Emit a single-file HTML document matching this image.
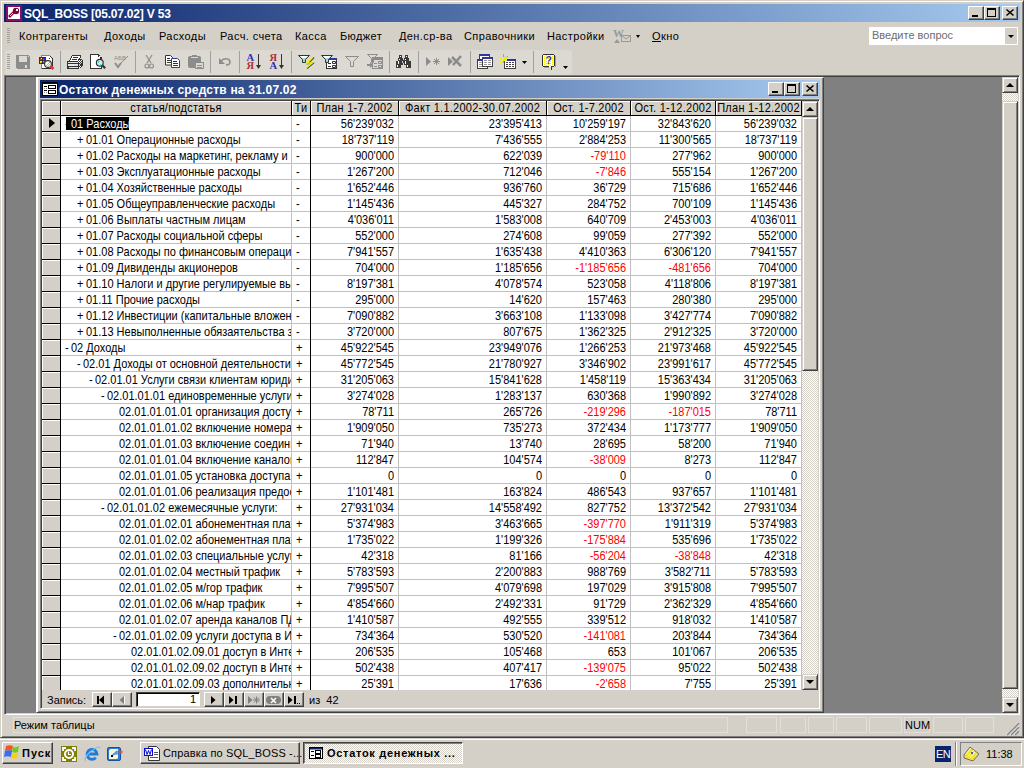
<!DOCTYPE html><html><head><meta charset="utf-8"><title>SQL_BOSS</title><style>
*{box-sizing:border-box;margin:0;padding:0}
html,body{width:1024px;height:768px;overflow:hidden;background:#d4d0c8;font-family:"Liberation Sans",sans-serif;font-size:11px;color:#000}
.abs{position:absolute}
.r3d{position:absolute;border:1px solid;border-color:#d4d0c8 #404040 #404040 #d4d0c8;box-shadow:inset 1px 1px #fff,inset -1px -1px #808080;background:#d4d0c8}
.tb3d{position:absolute;border:1px solid;border-color:#fff #404040 #404040 #fff;box-shadow:inset -1px -1px #808080;background:#d4d0c8}
.sunk{position:absolute;border:1px solid;border-color:#808080 #fff #fff #808080;box-shadow:inset 1px 1px #404040,inset -1px -1px #d4d0c8}
.t{position:absolute;white-space:pre;line-height:13px}
.m{transform:scaleY(1.125);transform-origin:0 10px}
.checker{background-color:#fff;background-image:linear-gradient(45deg,#d4d0c8 25%,transparent 25%,transparent 75%,#d4d0c8 75%),linear-gradient(45deg,#d4d0c8 25%,transparent 25%,transparent 75%,#d4d0c8 75%);background-size:2px 2px;background-position:0 0,1px 1px}
</style></head><body>
<div class="abs" style="left:0;top:0;width:1024px;height:738px;border:1px solid;border-color:#d4d0c8 #404040 #404040 #d4d0c8;box-shadow:inset 1px 1px #fff,inset -1px -1px #808080;background:#d4d0c8"></div>
<div class="abs" style="left:4px;top:4px;width:1016px;height:18px;background:linear-gradient(to right,#0a246a,#a6caf0)"></div>
<svg class="abs" style="left:6px;top:5px" width="16" height="16" viewBox="0 0 16 16" shape-rendering="crispEdges"><rect x="0" y="0" width="16" height="16" fill="#80106a"/><rect x="2" y="2" width="12" height="12" fill="#fff"/><path d="M3 12l5-5" stroke="#800040" stroke-width="2.6" shape-rendering="auto"/><circle cx="10" cy="6" r="3.2" fill="#800040" shape-rendering="auto"/><rect x="10" y="4" width="2" height="2" fill="#fff"/><path d="M4 11l3-3" stroke="#fff" stroke-width="0.8" shape-rendering="auto"/></svg>
<div class="t" style="left:24px;top:8px;color:#fff;font-weight:bold;font-size:12px;letter-spacing:-0.2px">SQL_BOSS [05.07.02] V 53</div>
<div class="tb3d" style="left:968px;top:6px;width:16px;height:14px"></div><div class="abs" style="left:972px;top:15px;width:6px;height:2px;background:#000"></div><div class="tb3d" style="left:984px;top:6px;width:16px;height:14px"></div><div class="abs" style="left:987px;top:8px;width:9px;height:9px;border:1px solid #000;border-top-width:2px"></div><div class="tb3d" style="left:1002px;top:6px;width:16px;height:14px"></div><svg class="abs" style="left:1002px;top:6px" width="16" height="14" viewBox="0 0 16 14"><path d="M4.5 3.5 L11.5 9.5 M11.5 3.5 L4.5 9.5" stroke="#000" stroke-width="1.6"/></svg>
<div class="abs" style="left:7px;top:28px;width:3px;height:15px;background:repeating-linear-gradient(to bottom,#a0a0a0 0,#a0a0a0 1px,transparent 1px,transparent 2px)"></div>
<div class="t" style="left:19px;top:30px;letter-spacing:0.4px">Контрагенты</div>
<div class="t" style="left:104px;top:30px;letter-spacing:0.4px">Доходы</div>
<div class="t" style="left:159px;top:30px;letter-spacing:0.4px">Расходы</div>
<div class="t" style="left:220px;top:30px;letter-spacing:0.4px">Расч. счета</div>
<div class="t" style="left:295px;top:30px;letter-spacing:0.4px">Касса</div>
<div class="t" style="left:340px;top:30px;letter-spacing:0.4px">Бюджет</div>
<div class="t" style="left:399px;top:30px;letter-spacing:0.4px">Ден.ср-ва</div>
<div class="t" style="left:464px;top:30px;letter-spacing:0.4px">Справочники</div>
<div class="t" style="left:547px;top:30px;letter-spacing:0.4px">Настройки</div>
<div class="t" style="left:652px;top:30px;letter-spacing:0.4px"><u>О</u>кно</div>
<svg class="abs" style="left:612px;top:27px" width="22" height="18" viewBox="0 0 22 18"><text x="1" y="10" font-family="Liberation Serif" font-size="11" font-weight="bold" fill="#999" letter-spacing="-1">W</text><rect x="9.5" y="8.5" width="9" height="6" fill="#d4d0c8" stroke="#999"/><path d="M9.5 8.5l4.5 3.5l4.5-3.5" fill="none" stroke="#999"/><path d="M2 16l3-4l3 4z" fill="#999"/></svg>
<div class="abs" style="left:636px;top:35px;width:0;height:0;border-left:2.5px solid transparent;border-right:2.5px solid transparent;border-top:3px solid #000"></div>
<div class="abs" style="left:869px;top:27px;width:149px;height:18px;background:#fff"></div>
<div class="t" style="left:872px;top:29px;color:#6d6d6d">Введите вопрос</div>
<div class="abs" style="left:1005px;top:28px;width:12px;height:16px;background:#d4d0c8"></div>
<div class="abs" style="left:1008px;top:35px;width:0;height:0;border-left:3px solid transparent;border-right:3px solid transparent;border-top:3px solid #000"></div>
<div class="abs" style="left:5px;top:50px;width:567px;height:25px;background:#dcd9d2;border-radius:3px"></div>
<div class="abs" style="left:7px;top:54px;width:3px;height:15px;background:repeating-linear-gradient(to bottom,#a0a0a0 0,#a0a0a0 1px,transparent 1px,transparent 2px)"></div>
<div class="abs" style="left:60px;top:51px;width:1px;height:22px;background:#a0a0a0"></div>
<div class="abs" style="left:135px;top:51px;width:1px;height:22px;background:#a0a0a0"></div>
<div class="abs" style="left:210px;top:51px;width:1px;height:22px;background:#a0a0a0"></div>
<div class="abs" style="left:239px;top:51px;width:1px;height:22px;background:#a0a0a0"></div>
<div class="abs" style="left:291px;top:51px;width:1px;height:22px;background:#a0a0a0"></div>
<div class="abs" style="left:389px;top:51px;width:1px;height:22px;background:#a0a0a0"></div>
<div class="abs" style="left:418px;top:51px;width:1px;height:22px;background:#a0a0a0"></div>
<div class="abs" style="left:470px;top:51px;width:1px;height:22px;background:#a0a0a0"></div>
<div class="abs" style="left:533px;top:51px;width:1px;height:22px;background:#a0a0a0"></div>
<svg class="abs" style="left:0;top:0" width="600" height="76" viewBox="0 0 600 76"><path d="M16 55h13v1h1v13h-13v-1h-1z" fill="#8c8c8c"/><rect x="19" y="56" width="8" height="6" fill="#dcd9d2"/><rect x="28" y="56" width="1" height="1" fill="#dcd9d2"/><rect x="25" y="65" width="2" height="3" fill="#dcd9d2"/><g shape-rendering="crispEdges"><rect x="41" y="55" width="9" height="14" fill="#888"/><rect x="42" y="56" width="8" height="12" fill="#fff"/><rect x="50" y="56" width="1" height="1" fill="#333"/><rect x="50" y="57" width="1" height="2" fill="#fff"/><rect x="49" y="58" width="1" height="1" fill="#333"/><rect x="51" y="57" width="1" height="1" fill="#333"/><rect x="50" y="59" width="2" height="9" fill="#fff"/><rect x="52" y="58" width="1" height="11" fill="#333"/><rect x="42" y="68" width="10" height="1" fill="#333"/><rect x="39" y="57" width="7" height="7" fill="#333"/><rect x="40" y="58" width="2" height="2" fill="#f02020"/><rect x="43" y="58" width="2" height="2" fill="#2020f0"/><rect x="40" y="61" width="2" height="2" fill="#f0f000"/><rect x="43" y="61" width="2" height="2" fill="#109010"/><rect x="41" y="58" width="1" height="1" fill="#c0f0f0"/><rect x="43" y="59" width="1" height="1" fill="#30a0a0"/><rect x="41" y="62" width="1" height="1" fill="#9090c0"/><rect x="43" y="61" width="1" height="1" fill="#a0a0c0"/></g><circle cx="48" cy="64" r="3.4" fill="#fff" stroke="#333" stroke-width="1.1"/><g shape-rendering="crispEdges" fill="#20f0f0"><rect x="49" y="62" width="1" height="1"/><rect x="48" y="63" width="1" height="1"/><rect x="50" y="63" width="1" height="1"/><rect x="47" y="64" width="1" height="1"/><rect x="49" y="64" width="1" height="1"/><rect x="46" y="65" width="1" height="1"/><rect x="48" y="65" width="1" height="1"/><rect x="47" y="66" width="1" height="1"/></g><path d="M50.5 66.3l3 2.6" stroke="#f03030" stroke-width="2.6"/><g shape-rendering="crispEdges"><rect x="72" y="55" width="9" height="1" fill="#333"/><rect x="71" y="56" width="10" height="2" fill="#333"/><rect x="70" y="58" width="10" height="2" fill="#333"/><rect x="69" y="60" width="11" height="1" fill="#333"/><rect x="72" y="56" width="8" height="2" fill="#fff"/><rect x="71" y="58" width="8" height="2" fill="#fff"/><rect x="70" y="60" width="9" height="1" fill="#fff"/><rect x="73" y="57" width="5" height="1" fill="#333"/><rect x="72" y="59" width="5" height="1" fill="#333"/><rect x="67" y="61" width="12" height="8" fill="#333"/><rect x="68" y="62" width="10" height="1" fill="#e0e0e0"/><rect x="68" y="64" width="11" height="2" fill="#e8e8f0"/><rect x="74" y="65" width="4" height="1" fill="#f0f000"/><rect x="69" y="67" width="9" height="1" fill="#e0e0e0"/><rect x="78" y="59" width="5" height="9" fill="#333"/><rect x="79" y="60" width="1" height="1" fill="#fff"/><rect x="81" y="60" width="1" height="1" fill="#fff"/><rect x="78" y="61" width="1" height="1" fill="#fff"/><rect x="80" y="61" width="1" height="1" fill="#fff"/><rect x="79" y="62" width="1" height="1" fill="#fff"/><rect x="81" y="62" width="1" height="1" fill="#ccc"/><rect x="80" y="63" width="1" height="1" fill="#ccc"/><rect x="79" y="64" width="1" height="2" fill="#ccc"/><rect x="80" y="66" width="1" height="1" fill="#fff"/><rect x="79" y="67" width="1" height="1" fill="#fff"/><rect x="82" y="59" width="1" height="1" fill="#d4d0c8"/><rect x="82" y="66" width="1" height="2" fill="#d4d0c8"/><rect x="81" y="67" width="1" height="1" fill="#d4d0c8"/></g><g shape-rendering="crispEdges"><rect x="90" y="54" width="9" height="15" fill="#333"/><rect x="91" y="55" width="7" height="13" fill="#fff"/><rect x="98" y="55" width="2" height="2" fill="#333"/><rect x="99" y="56" width="1" height="1" fill="#fff"/><rect x="100" y="57" width="2" height="3" fill="#333"/><rect x="98" y="57" width="2" height="11" fill="#fff"/><rect x="100" y="60" width="1" height="8" fill="#fff"/><rect x="90" y="68" width="12" height="1" fill="#333"/><rect x="101" y="66" width="1" height="2" fill="#333"/></g><circle cx="99.8" cy="62.8" r="3.4" fill="#e4e4e4" stroke="#333" stroke-width="1.2"/><g shape-rendering="crispEdges" fill="#20f0f0"><rect x="98" y="61" width="2" height="1"/><rect x="98" y="62" width="1" height="1"/><rect x="100" y="64" width="1" height="1"/></g><path d="M102.6 65.6l2.6 2.6" stroke="#333" stroke-width="2.2"/><text x="114" y="60" font-family="Liberation Sans" font-size="6" fill="#8c8c8c">АБВ</text><path d="M115 63l3 4l3-4" fill="none" stroke="#8c8c8c" stroke-width="2"/><path d="M121 63l7-7" stroke="#8c8c8c" stroke-width="1"/><path d="M146 55l5 8M152 55l-5 8" stroke="#8c8c8c" stroke-width="1.2"/><circle cx="147" cy="66" r="2" fill="none" stroke="#8c8c8c" stroke-width="1.1"/><circle cx="151.5" cy="66" r="2" fill="none" stroke="#8c8c8c" stroke-width="1.1"/><path d="M165.5 55.5h5l2 2v7.5h-7z" fill="#fff" stroke="#333"/><path d="M167 58.5h3M167 60.5h4M167 62.5h4" stroke="#333"/><path d="M171.5 58.5h6l2 2v7h-8z" fill="#fff" stroke="#3535a0"/><path d="M173 61.5h4M173 63.5h5M173 65.5h5" stroke="#333"/><rect x="188" y="56" width="13" height="12" rx="2" fill="#8c8c8c"/><rect x="192" y="55" width="5" height="2" fill="#8c8c8c"/><rect x="191" y="57" width="7" height="1" fill="#dcd9d2"/><rect x="195.5" y="62.5" width="8" height="6" fill="#dcd9d2" stroke="#8c8c8c"/><path d="M197 65.5h5M197 67.5h5" stroke="#8c8c8c"/><path d="M221 61c3-3 9-3 9 1c0 2-2 3-4 3" fill="none" stroke="#8c8c8c" stroke-width="1.5"/><path d="M219 58v6h6z" fill="#8c8c8c"/><text x="246.5" y="61.3" font-family="Liberation Serif" font-size="10.5" font-weight="bold" fill="#3030b0">A</text><text x="246.5" y="69" font-family="Liberation Serif" font-size="10.5" font-weight="bold" fill="#b03030">Я</text><path d="M258.5 54v13" stroke="#333" stroke-width="1"/><path d="M256 65h5l-2.5 4z" fill="#333"/><text x="269.5" y="61.3" font-family="Liberation Serif" font-size="10.5" font-weight="bold" fill="#b03030">Я</text><text x="269.5" y="69" font-family="Liberation Serif" font-size="10.5" font-weight="bold" fill="#3030b0">A</text><path d="M281.5 54v13" stroke="#333" stroke-width="1"/><path d="M279 65h5l-2.5 4z" fill="#333"/><path d="M298.5 55.5h11l-4 4v3h-3v-3z" fill="#9fd8d8" stroke="#333"/><path d="M300 56h8l-2 2h-4z" fill="#fff"/><path d="M314 57.5l-6 6h5l-6 5" fill="none" stroke="#303060" stroke-width="1.3"/><path d="M313 57l-6 6h5l-6 5" fill="none" stroke="#f0f000" stroke-width="1.6"/><rect x="326.5" y="58.5" width="10" height="10" fill="#fff" stroke="#333"/><rect x="327" y="58" width="10" height="2" fill="#3535a0"/><path d="M332.5 61.5h3v2h-3zM332.5 65.5h3v2h-3z" fill="none" stroke="#333"/><path d="M328 63.5h3M328 66.5h3" stroke="#333"/><path d="M321.5 55.5h11l-4 4v3h-3v-3z" fill="#9fd8d8" stroke="#333"/><path d="M323 56h8l-2 2h-4z" fill="#fff"/><path d="M345.5 56.5h13l-5 5v5h-3v-5z" fill="none" stroke="#8c8c8c" stroke-width="1"/><rect x="372.5" y="57.5" width="10" height="11" fill="none" stroke="#8c8c8c"/><rect x="373" y="58" width="10" height="2" fill="#8c8c8c"/><path d="M378.5 61.5h3v2h-3zM378.5 65.5h3v2h-3z" fill="none" stroke="#8c8c8c"/><path d="M374 63.5h3M374 66.5h3" stroke="#8c8c8c"/><path d="M367.5 54.5h10l-4 4v4h-2v-4z" fill="none" stroke="#8c8c8c"/><path d="M367 64h3v-2l3 3l-3 3v-2h-3z" fill="#8c8c8c"/><g fill="#3a3a3a" shape-rendering="crispEdges"><rect x="399" y="55" width="3" height="3"/><rect x="398" y="58" width="5" height="3"/><rect x="396" y="61" width="7" height="4"/><rect x="396" y="65" width="5" height="3"/><rect x="405" y="55" width="3" height="3"/><rect x="404" y="58" width="5" height="3"/><rect x="404" y="61" width="7" height="4"/><rect x="406" y="65" width="5" height="3"/><rect x="402" y="60" width="3" height="3"/></g><g fill="#fff" shape-rendering="crispEdges"><rect x="400" y="56" width="1" height="1"/><rect x="399" y="59" width="1" height="1"/><rect x="398" y="61" width="1" height="3"/><rect x="397" y="65" width="1" height="2"/><rect x="406" y="56" width="1" height="1"/><rect x="405" y="59" width="1" height="1"/><rect x="405" y="61" width="1" height="3"/><rect x="407" y="65" width="1" height="2"/><rect x="402" y="61" width="1" height="2" fill="#ccc"/></g><path d="M426 57v9l5-4.5z" fill="#8c8c8c"/><path d="M436.5 58v7M433 61.5h7M434 59l5 5M439 59l-5 5" stroke="#8c8c8c" stroke-width="1"/><path d="M448 57v9l5-4.5z" fill="#8c8c8c"/><path d="M452 57l9 9M461 56l-8 9" stroke="#8c8c8c" stroke-width="2.5"/><g shape-rendering="crispEdges"><rect x="479" y="54" width="11" height="6" fill="#404040"/><rect x="479" y="54" width="11" height="2" fill="#3535a0"/><rect x="480" y="56" width="9" height="3" fill="#fff"/><rect x="477" y="59" width="11" height="10" fill="#404040"/><rect x="477" y="59" width="11" height="2" fill="#3535a0"/><rect x="478" y="61" width="9" height="7" fill="#fff"/><rect x="479" y="62" width="3" height="1" fill="#999"/><rect x="479" y="64" width="3" height="1" fill="#999"/><rect x="479" y="66" width="3" height="1" fill="#999"/><rect x="482" y="57" width="11" height="10" fill="#404040"/><rect x="482" y="57" width="11" height="2" fill="#3535a0"/><rect x="483" y="59" width="9" height="7" fill="#fff"/><rect x="484" y="60" width="3" height="1" fill="#999"/><rect x="488" y="60" width="3" height="1" fill="#999"/><rect x="484" y="62" width="3" height="1" fill="#999"/><rect x="488" y="62" width="3" height="1" fill="#999"/><rect x="484" y="64" width="3" height="1" fill="#999"/><rect x="488" y="64" width="3" height="1" fill="#999"/></g><g shape-rendering="crispEdges"><rect x="504" y="59" width="12" height="10" fill="#404040"/><rect x="504" y="59" width="12" height="2" fill="#3535a0"/><rect x="505" y="61" width="10" height="7" fill="#fff"/><g fill="#404040"><rect x="506" y="62" width="2" height="1"/><rect x="509" y="62" width="2" height="1"/><rect x="512" y="62" width="2" height="1"/><rect x="506" y="64" width="2" height="1"/><rect x="509" y="64" width="2" height="1"/><rect x="512" y="64" width="2" height="1"/><rect x="506" y="66" width="2" height="1"/><rect x="509" y="66" width="2" height="1"/><rect x="512" y="66" width="2" height="1"/></g><rect x="503" y="56" width="4" height="5" fill="#d4d0c8"/><g fill="#f0f000"><rect x="504" y="55" width="1" height="1"/><rect x="501" y="56" width="1" height="1"/><rect x="500" y="58" width="1" height="1"/><rect x="503" y="58" width="2" height="2"/><rect x="506" y="58" width="1" height="1"/><rect x="502" y="60" width="1" height="1"/><rect x="500" y="62" width="1" height="1"/><rect x="504" y="60" width="1" height="1"/></g><g fill="#a0a0a0"><rect x="503" y="54" width="1" height="3"/><rect x="503" y="61" width="1" height="2"/><rect x="507" y="56" width="1" height="1"/></g></g><path d="M522 61h5l-2.5 3z" fill="#000"/><g shape-rendering="crispEdges"><rect x="543" y="54" width="11" height="13" fill="#333"/><rect x="542" y="55" width="13" height="11" fill="#333"/><rect x="543" y="55" width="11" height="11" fill="#fff"/><g fill="#f0f000"><rect x="544" y="56" width="1" height="1"/><rect x="548" y="56" width="1" height="1"/><rect x="552" y="56" width="1" height="1"/><rect x="544" y="58" width="1" height="1"/><rect x="548" y="58" width="1" height="1"/><rect x="552" y="58" width="1" height="1"/><rect x="544" y="60" width="1" height="1"/><rect x="548" y="60" width="1" height="1"/><rect x="552" y="60" width="1" height="1"/><rect x="544" y="62" width="1" height="1"/><rect x="548" y="62" width="1" height="1"/><rect x="552" y="62" width="1" height="1"/><rect x="544" y="64" width="1" height="1"/><rect x="548" y="64" width="1" height="1"/><rect x="552" y="64" width="1" height="1"/><rect x="546" y="55" width="1" height="1"/><rect x="550" y="55" width="1" height="1"/><rect x="546" y="57" width="1" height="1"/><rect x="550" y="57" width="1" height="1"/><rect x="546" y="59" width="1" height="1"/><rect x="550" y="59" width="1" height="1"/><rect x="546" y="61" width="1" height="1"/><rect x="550" y="61" width="1" height="1"/><rect x="546" y="63" width="1" height="1"/><rect x="550" y="63" width="1" height="1"/><rect x="546" y="65" width="1" height="1"/><rect x="550" y="65" width="1" height="1"/></g><rect x="555" y="56" width="1" height="11" fill="#a0a0a0"/><rect x="544" y="67" width="5" height="1" fill="#a0a0a0"/><rect x="549" y="66" width="2" height="1" fill="#fff"/><rect x="550" y="67" width="2" height="1" fill="#333"/><rect x="551" y="68" width="1" height="2" fill="#333"/><rect x="550" y="67" width="1" height="1" fill="#f0f000"/></g><text x="545.6" y="64.2" font-family="Liberation Sans" font-size="10.5" font-weight="bold" fill="#3535a0">?</text><path d="M563 66h5l-2.5 3z" fill="#000"/></svg>
<div class="sunk" style="left:4px;top:75px;width:1016px;height:640px;background:#808080"></div>
<div class="checker abs" style="left:1002px;top:77px;width:16px;height:636px"></div>
<div class="r3d" style="left:1002px;top:77px;width:16px;height:16px"></div>
<div class="abs" style="left:1006px;top:83px;width:0;height:0;border-left:4px solid transparent;border-right:4px solid transparent;border-bottom:4px solid #000"></div>
<div class="r3d" style="left:1002px;top:101px;width:16px;height:588px"></div>
<div class="r3d" style="left:1002px;top:697px;width:16px;height:16px"></div>
<div class="abs" style="left:1006px;top:703px;width:0;height:0;border-left:4px solid transparent;border-right:4px solid transparent;border-top:4px solid #000"></div>
<div class="abs" style="left:36px;top:77px;width:788px;height:636px;border:1px solid;border-color:#fff #404040 #404040 #fff;box-shadow:inset 1px 0 #fff,inset -1px -1px #808080;background:#d4d0c8"></div>
<div class="abs" style="left:40px;top:80px;width:780px;height:18px;background:linear-gradient(to right,#0a246a,#a6caf0)"></div>
<svg class="abs" style="left:42px;top:82px" width="16" height="14" viewBox="0 0 16 14" shape-rendering="crispEdges"><rect x="0" y="0" width="16" height="14" fill="#000"/><rect x="1" y="1" width="14" height="1" fill="#0000a0"/><rect x="1" y="2" width="14" height="11" fill="#fff"/><rect x="2" y="4" width="3" height="1" fill="#000"/><rect x="2" y="8" width="3" height="1" fill="#000"/><rect x="6" y="3" width="8" height="4" fill="#000"/><rect x="7" y="4" width="6" height="2" fill="#fff"/><rect x="6" y="8" width="8" height="4" fill="#000"/><rect x="7" y="9" width="6" height="2" fill="#fff"/><rect x="2" y="6" width="1" height="1" fill="#888"/><rect x="4" y="6" width="1" height="1" fill="#888"/><rect x="2" y="10" width="1" height="1" fill="#888"/><rect x="4" y="10" width="1" height="1" fill="#888"/></svg>
<div class="t" style="left:59px;top:84px;color:#fff;font-weight:bold;font-size:12px;letter-spacing:0.2px">Остаток денежных средств на 31.07.02</div>
<div class="tb3d" style="left:768px;top:82px;width:16px;height:14px"></div><div class="abs" style="left:772px;top:91px;width:6px;height:2px;background:#000"></div><div class="tb3d" style="left:784px;top:82px;width:16px;height:14px"></div><div class="abs" style="left:787px;top:84px;width:9px;height:9px;border:1px solid #000;border-top-width:2px"></div><div class="tb3d" style="left:802px;top:82px;width:16px;height:14px"></div><svg class="abs" style="left:802px;top:82px" width="16" height="14" viewBox="0 0 16 14"><path d="M4.5 3.5 L11.5 9.5 M11.5 3.5 L4.5 9.5" stroke="#000" stroke-width="1.6"/></svg>
<div class="sunk" style="left:40px;top:99px;width:780px;height:610px;background:#d4d0c8"></div>
<div class="abs" style="left:61px;top:116px;width:741px;height:574px;background:#fff"></div>
<div class="abs" style="left:42px;top:101px;width:760px;height:14px;background:#d4d0c8"></div>
<div class="abs" style="left:42px;top:101px;width:18px;height:14px;box-shadow:inset 1px 1px #fff"></div>
<div class="abs" style="left:61px;top:101px;width:230px;height:14px;box-shadow:inset 1px 1px #fff"></div>
<div class="t m" style="left:61px;top:102px;width:230px;text-align:center;overflow:hidden;letter-spacing:0.25px">статья/подстатья</div>
<div class="abs" style="left:292px;top:101px;width:18px;height:14px;box-shadow:inset 1px 1px #fff"></div>
<div class="t m" style="left:292px;top:102px;width:18px;text-align:center;overflow:hidden;letter-spacing:0.25px">Ти</div>
<div class="abs" style="left:311px;top:101px;width:87px;height:14px;box-shadow:inset 1px 1px #fff"></div>
<div class="t m" style="left:311px;top:102px;width:87px;text-align:center;overflow:hidden;letter-spacing:0.25px">План 1-7.2002</div>
<div class="abs" style="left:399px;top:101px;width:147px;height:14px;box-shadow:inset 1px 1px #fff"></div>
<div class="t m" style="left:399px;top:102px;width:147px;text-align:center;overflow:hidden;letter-spacing:0.25px">Факт 1.1.2002-30.07.2002</div>
<div class="abs" style="left:547px;top:101px;width:83px;height:14px;box-shadow:inset 1px 1px #fff"></div>
<div class="t m" style="left:547px;top:102px;width:83px;text-align:center;overflow:hidden;letter-spacing:0.25px">Ост. 1-7.2002</div>
<div class="abs" style="left:631px;top:101px;width:84px;height:14px;box-shadow:inset 1px 1px #fff"></div>
<div class="t m" style="left:631px;top:102px;width:84px;text-align:center;overflow:hidden;letter-spacing:0.25px">Ост. 1-12.2002</div>
<div class="abs" style="left:716px;top:101px;width:85px;height:14px;box-shadow:inset 1px 1px #fff"></div>
<div class="t m" style="left:716px;top:102px;width:85px;text-align:center;overflow:hidden;letter-spacing:0.25px">План 1-12.2002</div>
<div class="abs" style="left:42px;top:115px;width:760px;height:1px;background:#000"></div>
<div class="abs" style="left:42px;top:116px;width:18px;height:574px;background:#d4d0c8"></div>
<div class="abs" style="left:60px;top:101px;width:1px;height:589px;background:#000"></div>
<div class="abs" style="left:42px;top:116px;width:18px;height:15px;box-shadow:inset 1px 1px #fff"></div>
<div class="abs" style="left:42px;top:131px;width:18px;height:1px;background:#000"></div>
<div class="abs" style="left:61px;top:131px;width:741px;height:1px;background:#c0c0c0"></div>
<div class="abs" style="left:42px;top:132px;width:18px;height:15px;box-shadow:inset 1px 1px #fff"></div>
<div class="abs" style="left:42px;top:147px;width:18px;height:1px;background:#000"></div>
<div class="abs" style="left:61px;top:147px;width:741px;height:1px;background:#c0c0c0"></div>
<div class="abs" style="left:42px;top:148px;width:18px;height:15px;box-shadow:inset 1px 1px #fff"></div>
<div class="abs" style="left:42px;top:163px;width:18px;height:1px;background:#000"></div>
<div class="abs" style="left:61px;top:163px;width:741px;height:1px;background:#c0c0c0"></div>
<div class="abs" style="left:42px;top:164px;width:18px;height:15px;box-shadow:inset 1px 1px #fff"></div>
<div class="abs" style="left:42px;top:179px;width:18px;height:1px;background:#000"></div>
<div class="abs" style="left:61px;top:179px;width:741px;height:1px;background:#c0c0c0"></div>
<div class="abs" style="left:42px;top:180px;width:18px;height:15px;box-shadow:inset 1px 1px #fff"></div>
<div class="abs" style="left:42px;top:195px;width:18px;height:1px;background:#000"></div>
<div class="abs" style="left:61px;top:195px;width:741px;height:1px;background:#c0c0c0"></div>
<div class="abs" style="left:42px;top:196px;width:18px;height:15px;box-shadow:inset 1px 1px #fff"></div>
<div class="abs" style="left:42px;top:211px;width:18px;height:1px;background:#000"></div>
<div class="abs" style="left:61px;top:211px;width:741px;height:1px;background:#c0c0c0"></div>
<div class="abs" style="left:42px;top:212px;width:18px;height:15px;box-shadow:inset 1px 1px #fff"></div>
<div class="abs" style="left:42px;top:227px;width:18px;height:1px;background:#000"></div>
<div class="abs" style="left:61px;top:227px;width:741px;height:1px;background:#c0c0c0"></div>
<div class="abs" style="left:42px;top:228px;width:18px;height:15px;box-shadow:inset 1px 1px #fff"></div>
<div class="abs" style="left:42px;top:243px;width:18px;height:1px;background:#000"></div>
<div class="abs" style="left:61px;top:243px;width:741px;height:1px;background:#c0c0c0"></div>
<div class="abs" style="left:42px;top:244px;width:18px;height:15px;box-shadow:inset 1px 1px #fff"></div>
<div class="abs" style="left:42px;top:259px;width:18px;height:1px;background:#000"></div>
<div class="abs" style="left:61px;top:259px;width:741px;height:1px;background:#c0c0c0"></div>
<div class="abs" style="left:42px;top:260px;width:18px;height:15px;box-shadow:inset 1px 1px #fff"></div>
<div class="abs" style="left:42px;top:275px;width:18px;height:1px;background:#000"></div>
<div class="abs" style="left:61px;top:275px;width:741px;height:1px;background:#c0c0c0"></div>
<div class="abs" style="left:42px;top:276px;width:18px;height:15px;box-shadow:inset 1px 1px #fff"></div>
<div class="abs" style="left:42px;top:291px;width:18px;height:1px;background:#000"></div>
<div class="abs" style="left:61px;top:291px;width:741px;height:1px;background:#c0c0c0"></div>
<div class="abs" style="left:42px;top:292px;width:18px;height:15px;box-shadow:inset 1px 1px #fff"></div>
<div class="abs" style="left:42px;top:307px;width:18px;height:1px;background:#000"></div>
<div class="abs" style="left:61px;top:307px;width:741px;height:1px;background:#c0c0c0"></div>
<div class="abs" style="left:42px;top:308px;width:18px;height:15px;box-shadow:inset 1px 1px #fff"></div>
<div class="abs" style="left:42px;top:323px;width:18px;height:1px;background:#000"></div>
<div class="abs" style="left:61px;top:323px;width:741px;height:1px;background:#c0c0c0"></div>
<div class="abs" style="left:42px;top:324px;width:18px;height:15px;box-shadow:inset 1px 1px #fff"></div>
<div class="abs" style="left:42px;top:339px;width:18px;height:1px;background:#000"></div>
<div class="abs" style="left:61px;top:339px;width:741px;height:1px;background:#c0c0c0"></div>
<div class="abs" style="left:42px;top:340px;width:18px;height:15px;box-shadow:inset 1px 1px #fff"></div>
<div class="abs" style="left:42px;top:355px;width:18px;height:1px;background:#000"></div>
<div class="abs" style="left:61px;top:355px;width:741px;height:1px;background:#c0c0c0"></div>
<div class="abs" style="left:42px;top:356px;width:18px;height:15px;box-shadow:inset 1px 1px #fff"></div>
<div class="abs" style="left:42px;top:371px;width:18px;height:1px;background:#000"></div>
<div class="abs" style="left:61px;top:371px;width:741px;height:1px;background:#c0c0c0"></div>
<div class="abs" style="left:42px;top:372px;width:18px;height:15px;box-shadow:inset 1px 1px #fff"></div>
<div class="abs" style="left:42px;top:387px;width:18px;height:1px;background:#000"></div>
<div class="abs" style="left:61px;top:387px;width:741px;height:1px;background:#c0c0c0"></div>
<div class="abs" style="left:42px;top:388px;width:18px;height:15px;box-shadow:inset 1px 1px #fff"></div>
<div class="abs" style="left:42px;top:403px;width:18px;height:1px;background:#000"></div>
<div class="abs" style="left:61px;top:403px;width:741px;height:1px;background:#c0c0c0"></div>
<div class="abs" style="left:42px;top:404px;width:18px;height:15px;box-shadow:inset 1px 1px #fff"></div>
<div class="abs" style="left:42px;top:419px;width:18px;height:1px;background:#000"></div>
<div class="abs" style="left:61px;top:419px;width:741px;height:1px;background:#c0c0c0"></div>
<div class="abs" style="left:42px;top:420px;width:18px;height:15px;box-shadow:inset 1px 1px #fff"></div>
<div class="abs" style="left:42px;top:435px;width:18px;height:1px;background:#000"></div>
<div class="abs" style="left:61px;top:435px;width:741px;height:1px;background:#c0c0c0"></div>
<div class="abs" style="left:42px;top:436px;width:18px;height:15px;box-shadow:inset 1px 1px #fff"></div>
<div class="abs" style="left:42px;top:451px;width:18px;height:1px;background:#000"></div>
<div class="abs" style="left:61px;top:451px;width:741px;height:1px;background:#c0c0c0"></div>
<div class="abs" style="left:42px;top:452px;width:18px;height:15px;box-shadow:inset 1px 1px #fff"></div>
<div class="abs" style="left:42px;top:467px;width:18px;height:1px;background:#000"></div>
<div class="abs" style="left:61px;top:467px;width:741px;height:1px;background:#c0c0c0"></div>
<div class="abs" style="left:42px;top:468px;width:18px;height:15px;box-shadow:inset 1px 1px #fff"></div>
<div class="abs" style="left:42px;top:483px;width:18px;height:1px;background:#000"></div>
<div class="abs" style="left:61px;top:483px;width:741px;height:1px;background:#c0c0c0"></div>
<div class="abs" style="left:42px;top:484px;width:18px;height:15px;box-shadow:inset 1px 1px #fff"></div>
<div class="abs" style="left:42px;top:499px;width:18px;height:1px;background:#000"></div>
<div class="abs" style="left:61px;top:499px;width:741px;height:1px;background:#c0c0c0"></div>
<div class="abs" style="left:42px;top:500px;width:18px;height:15px;box-shadow:inset 1px 1px #fff"></div>
<div class="abs" style="left:42px;top:515px;width:18px;height:1px;background:#000"></div>
<div class="abs" style="left:61px;top:515px;width:741px;height:1px;background:#c0c0c0"></div>
<div class="abs" style="left:42px;top:516px;width:18px;height:15px;box-shadow:inset 1px 1px #fff"></div>
<div class="abs" style="left:42px;top:531px;width:18px;height:1px;background:#000"></div>
<div class="abs" style="left:61px;top:531px;width:741px;height:1px;background:#c0c0c0"></div>
<div class="abs" style="left:42px;top:532px;width:18px;height:15px;box-shadow:inset 1px 1px #fff"></div>
<div class="abs" style="left:42px;top:547px;width:18px;height:1px;background:#000"></div>
<div class="abs" style="left:61px;top:547px;width:741px;height:1px;background:#c0c0c0"></div>
<div class="abs" style="left:42px;top:548px;width:18px;height:15px;box-shadow:inset 1px 1px #fff"></div>
<div class="abs" style="left:42px;top:563px;width:18px;height:1px;background:#000"></div>
<div class="abs" style="left:61px;top:563px;width:741px;height:1px;background:#c0c0c0"></div>
<div class="abs" style="left:42px;top:564px;width:18px;height:15px;box-shadow:inset 1px 1px #fff"></div>
<div class="abs" style="left:42px;top:579px;width:18px;height:1px;background:#000"></div>
<div class="abs" style="left:61px;top:579px;width:741px;height:1px;background:#c0c0c0"></div>
<div class="abs" style="left:42px;top:580px;width:18px;height:15px;box-shadow:inset 1px 1px #fff"></div>
<div class="abs" style="left:42px;top:595px;width:18px;height:1px;background:#000"></div>
<div class="abs" style="left:61px;top:595px;width:741px;height:1px;background:#c0c0c0"></div>
<div class="abs" style="left:42px;top:596px;width:18px;height:15px;box-shadow:inset 1px 1px #fff"></div>
<div class="abs" style="left:42px;top:611px;width:18px;height:1px;background:#000"></div>
<div class="abs" style="left:61px;top:611px;width:741px;height:1px;background:#c0c0c0"></div>
<div class="abs" style="left:42px;top:612px;width:18px;height:15px;box-shadow:inset 1px 1px #fff"></div>
<div class="abs" style="left:42px;top:627px;width:18px;height:1px;background:#000"></div>
<div class="abs" style="left:61px;top:627px;width:741px;height:1px;background:#c0c0c0"></div>
<div class="abs" style="left:42px;top:628px;width:18px;height:15px;box-shadow:inset 1px 1px #fff"></div>
<div class="abs" style="left:42px;top:643px;width:18px;height:1px;background:#000"></div>
<div class="abs" style="left:61px;top:643px;width:741px;height:1px;background:#c0c0c0"></div>
<div class="abs" style="left:42px;top:644px;width:18px;height:15px;box-shadow:inset 1px 1px #fff"></div>
<div class="abs" style="left:42px;top:659px;width:18px;height:1px;background:#000"></div>
<div class="abs" style="left:61px;top:659px;width:741px;height:1px;background:#c0c0c0"></div>
<div class="abs" style="left:42px;top:660px;width:18px;height:15px;box-shadow:inset 1px 1px #fff"></div>
<div class="abs" style="left:42px;top:675px;width:18px;height:1px;background:#000"></div>
<div class="abs" style="left:61px;top:675px;width:741px;height:1px;background:#c0c0c0"></div>
<div class="abs" style="left:42px;top:676px;width:18px;height:14px;box-shadow:inset 1px 1px #fff"></div>
<div class="abs" style="left:291px;top:101px;width:1px;height:14px;background:#000"></div>
<div class="abs" style="left:291px;top:116px;width:1px;height:574px;background:#c0c0c0"></div>
<div class="abs" style="left:310px;top:101px;width:1px;height:589px;background:#000"></div>
<div class="abs" style="left:398px;top:101px;width:1px;height:14px;background:#000"></div>
<div class="abs" style="left:398px;top:116px;width:1px;height:574px;background:#c0c0c0"></div>
<div class="abs" style="left:546px;top:101px;width:1px;height:14px;background:#000"></div>
<div class="abs" style="left:546px;top:116px;width:1px;height:574px;background:#c0c0c0"></div>
<div class="abs" style="left:630px;top:101px;width:1px;height:14px;background:#000"></div>
<div class="abs" style="left:630px;top:116px;width:1px;height:574px;background:#c0c0c0"></div>
<div class="abs" style="left:715px;top:101px;width:1px;height:14px;background:#000"></div>
<div class="abs" style="left:715px;top:116px;width:1px;height:574px;background:#c0c0c0"></div>
<div class="abs" style="left:801px;top:101px;width:1px;height:14px;background:#000"></div>
<div class="abs" style="left:801px;top:116px;width:1px;height:574px;background:#c0c0c0"></div>
<div class="abs" style="left:49px;top:118px;width:0;height:0;border-top:5.5px solid transparent;border-bottom:5.5px solid transparent;border-left:6px solid #000"></div>
<div class="abs" style="left:61px;top:116px;width:741px;height:574px;overflow:hidden">
<div class="abs" style="left:0;top:0px;width:230px;height:15px;overflow:hidden">
<div class="abs" style="left:5px;top:1px;width:63px;height:13px;background:#000"></div>
<div class="t m" style="left:4px;top:2px">-</div>
<div class="t m" style="left:10px;top:2px;color:#fff">01 Расходы</div>
</div>
<div class="t m" style="left:235px;top:2px">-</div>
<div class="t m" style="left:250px;top:2px;width:83px;text-align:right;color:#000">56'239'032</div>
<div class="t m" style="left:338px;top:2px;width:143px;text-align:right;color:#000">23'395'413</div>
<div class="t m" style="left:486px;top:2px;width:79px;text-align:right;color:#000">10'259'197</div>
<div class="t m" style="left:570px;top:2px;width:80px;text-align:right;color:#000">32'843'620</div>
<div class="t m" style="left:655px;top:2px;width:81px;text-align:right;color:#000">56'239'032</div>
<div class="abs" style="left:0;top:16px;width:230px;height:15px;overflow:hidden">
<div class="t m" style="left:16px;top:2px">+</div>
<div class="t m" style="left:25px;top:2px">01.01 Операционные расходы</div>
</div>
<div class="t m" style="left:235px;top:18px">-</div>
<div class="t m" style="left:250px;top:18px;width:83px;text-align:right;color:#000">18'737'119</div>
<div class="t m" style="left:338px;top:18px;width:143px;text-align:right;color:#000">7'436'555</div>
<div class="t m" style="left:486px;top:18px;width:79px;text-align:right;color:#000">2'884'253</div>
<div class="t m" style="left:570px;top:18px;width:80px;text-align:right;color:#000">11'300'565</div>
<div class="t m" style="left:655px;top:18px;width:81px;text-align:right;color:#000">18'737'119</div>
<div class="abs" style="left:0;top:32px;width:230px;height:15px;overflow:hidden">
<div class="t m" style="left:16px;top:2px">+</div>
<div class="t m" style="left:25px;top:2px">01.02 Расходы на маркетинг, рекламу и</div>
</div>
<div class="t m" style="left:235px;top:34px">-</div>
<div class="t m" style="left:250px;top:34px;width:83px;text-align:right;color:#000">900'000</div>
<div class="t m" style="left:338px;top:34px;width:143px;text-align:right;color:#000">622'039</div>
<div class="t m" style="left:486px;top:34px;width:79px;text-align:right;color:#f00">-79'110</div>
<div class="t m" style="left:570px;top:34px;width:80px;text-align:right;color:#000">277'962</div>
<div class="t m" style="left:655px;top:34px;width:81px;text-align:right;color:#000">900'000</div>
<div class="abs" style="left:0;top:48px;width:230px;height:15px;overflow:hidden">
<div class="t m" style="left:16px;top:2px">+</div>
<div class="t m" style="left:25px;top:2px">01.03 Эксплуатационные расходы</div>
</div>
<div class="t m" style="left:235px;top:50px">-</div>
<div class="t m" style="left:250px;top:50px;width:83px;text-align:right;color:#000">1'267'200</div>
<div class="t m" style="left:338px;top:50px;width:143px;text-align:right;color:#000">712'046</div>
<div class="t m" style="left:486px;top:50px;width:79px;text-align:right;color:#f00">-7'846</div>
<div class="t m" style="left:570px;top:50px;width:80px;text-align:right;color:#000">555'154</div>
<div class="t m" style="left:655px;top:50px;width:81px;text-align:right;color:#000">1'267'200</div>
<div class="abs" style="left:0;top:64px;width:230px;height:15px;overflow:hidden">
<div class="t m" style="left:16px;top:2px">+</div>
<div class="t m" style="left:25px;top:2px">01.04 Хозяйственные расходы</div>
</div>
<div class="t m" style="left:235px;top:66px">-</div>
<div class="t m" style="left:250px;top:66px;width:83px;text-align:right;color:#000">1'652'446</div>
<div class="t m" style="left:338px;top:66px;width:143px;text-align:right;color:#000">936'760</div>
<div class="t m" style="left:486px;top:66px;width:79px;text-align:right;color:#000">36'729</div>
<div class="t m" style="left:570px;top:66px;width:80px;text-align:right;color:#000">715'686</div>
<div class="t m" style="left:655px;top:66px;width:81px;text-align:right;color:#000">1'652'446</div>
<div class="abs" style="left:0;top:80px;width:230px;height:15px;overflow:hidden">
<div class="t m" style="left:16px;top:2px">+</div>
<div class="t m" style="left:25px;top:2px">01.05 Общеуправленческие расходы</div>
</div>
<div class="t m" style="left:235px;top:82px">-</div>
<div class="t m" style="left:250px;top:82px;width:83px;text-align:right;color:#000">1'145'436</div>
<div class="t m" style="left:338px;top:82px;width:143px;text-align:right;color:#000">445'327</div>
<div class="t m" style="left:486px;top:82px;width:79px;text-align:right;color:#000">284'752</div>
<div class="t m" style="left:570px;top:82px;width:80px;text-align:right;color:#000">700'109</div>
<div class="t m" style="left:655px;top:82px;width:81px;text-align:right;color:#000">1'145'436</div>
<div class="abs" style="left:0;top:96px;width:230px;height:15px;overflow:hidden">
<div class="t m" style="left:16px;top:2px">+</div>
<div class="t m" style="left:25px;top:2px">01.06 Выплаты частным лицам</div>
</div>
<div class="t m" style="left:235px;top:98px">-</div>
<div class="t m" style="left:250px;top:98px;width:83px;text-align:right;color:#000">4'036'011</div>
<div class="t m" style="left:338px;top:98px;width:143px;text-align:right;color:#000">1'583'008</div>
<div class="t m" style="left:486px;top:98px;width:79px;text-align:right;color:#000">640'709</div>
<div class="t m" style="left:570px;top:98px;width:80px;text-align:right;color:#000">2'453'003</div>
<div class="t m" style="left:655px;top:98px;width:81px;text-align:right;color:#000">4'036'011</div>
<div class="abs" style="left:0;top:112px;width:230px;height:15px;overflow:hidden">
<div class="t m" style="left:16px;top:2px">+</div>
<div class="t m" style="left:25px;top:2px">01.07 Расходы социальной сферы</div>
</div>
<div class="t m" style="left:235px;top:114px">-</div>
<div class="t m" style="left:250px;top:114px;width:83px;text-align:right;color:#000">552'000</div>
<div class="t m" style="left:338px;top:114px;width:143px;text-align:right;color:#000">274'608</div>
<div class="t m" style="left:486px;top:114px;width:79px;text-align:right;color:#000">99'059</div>
<div class="t m" style="left:570px;top:114px;width:80px;text-align:right;color:#000">277'392</div>
<div class="t m" style="left:655px;top:114px;width:81px;text-align:right;color:#000">552'000</div>
<div class="abs" style="left:0;top:128px;width:230px;height:15px;overflow:hidden">
<div class="t m" style="left:16px;top:2px">+</div>
<div class="t m" style="left:25px;top:2px">01.08 Расходы по финансовым операциям</div>
</div>
<div class="t m" style="left:235px;top:130px">-</div>
<div class="t m" style="left:250px;top:130px;width:83px;text-align:right;color:#000">7'941'557</div>
<div class="t m" style="left:338px;top:130px;width:143px;text-align:right;color:#000">1'635'438</div>
<div class="t m" style="left:486px;top:130px;width:79px;text-align:right;color:#000">4'410'363</div>
<div class="t m" style="left:570px;top:130px;width:80px;text-align:right;color:#000">6'306'120</div>
<div class="t m" style="left:655px;top:130px;width:81px;text-align:right;color:#000">7'941'557</div>
<div class="abs" style="left:0;top:144px;width:230px;height:15px;overflow:hidden">
<div class="t m" style="left:16px;top:2px">+</div>
<div class="t m" style="left:25px;top:2px">01.09 Дивиденды акционеров</div>
</div>
<div class="t m" style="left:235px;top:146px">-</div>
<div class="t m" style="left:250px;top:146px;width:83px;text-align:right;color:#000">704'000</div>
<div class="t m" style="left:338px;top:146px;width:143px;text-align:right;color:#000">1'185'656</div>
<div class="t m" style="left:486px;top:146px;width:79px;text-align:right;color:#f00">-1'185'656</div>
<div class="t m" style="left:570px;top:146px;width:80px;text-align:right;color:#f00">-481'656</div>
<div class="t m" style="left:655px;top:146px;width:81px;text-align:right;color:#000">704'000</div>
<div class="abs" style="left:0;top:160px;width:230px;height:15px;overflow:hidden">
<div class="t m" style="left:16px;top:2px">+</div>
<div class="t m" style="left:25px;top:2px">01.10 Налоги и другие регулируемые выплаты</div>
</div>
<div class="t m" style="left:235px;top:162px">-</div>
<div class="t m" style="left:250px;top:162px;width:83px;text-align:right;color:#000">8'197'381</div>
<div class="t m" style="left:338px;top:162px;width:143px;text-align:right;color:#000">4'078'574</div>
<div class="t m" style="left:486px;top:162px;width:79px;text-align:right;color:#000">523'058</div>
<div class="t m" style="left:570px;top:162px;width:80px;text-align:right;color:#000">4'118'806</div>
<div class="t m" style="left:655px;top:162px;width:81px;text-align:right;color:#000">8'197'381</div>
<div class="abs" style="left:0;top:176px;width:230px;height:15px;overflow:hidden">
<div class="t m" style="left:16px;top:2px">+</div>
<div class="t m" style="left:25px;top:2px">01.11 Прочие расходы</div>
</div>
<div class="t m" style="left:235px;top:178px">-</div>
<div class="t m" style="left:250px;top:178px;width:83px;text-align:right;color:#000">295'000</div>
<div class="t m" style="left:338px;top:178px;width:143px;text-align:right;color:#000">14'620</div>
<div class="t m" style="left:486px;top:178px;width:79px;text-align:right;color:#000">157'463</div>
<div class="t m" style="left:570px;top:178px;width:80px;text-align:right;color:#000">280'380</div>
<div class="t m" style="left:655px;top:178px;width:81px;text-align:right;color:#000">295'000</div>
<div class="abs" style="left:0;top:192px;width:230px;height:15px;overflow:hidden">
<div class="t m" style="left:16px;top:2px">+</div>
<div class="t m" style="left:25px;top:2px">01.12 Инвестиции (капитальные вложения)</div>
</div>
<div class="t m" style="left:235px;top:194px">-</div>
<div class="t m" style="left:250px;top:194px;width:83px;text-align:right;color:#000">7'090'882</div>
<div class="t m" style="left:338px;top:194px;width:143px;text-align:right;color:#000">3'663'108</div>
<div class="t m" style="left:486px;top:194px;width:79px;text-align:right;color:#000">1'133'098</div>
<div class="t m" style="left:570px;top:194px;width:80px;text-align:right;color:#000">3'427'774</div>
<div class="t m" style="left:655px;top:194px;width:81px;text-align:right;color:#000">7'090'882</div>
<div class="abs" style="left:0;top:208px;width:230px;height:15px;overflow:hidden">
<div class="t m" style="left:16px;top:2px">+</div>
<div class="t m" style="left:25px;top:2px">01.13 Невыполненные обязаятельства за</div>
</div>
<div class="t m" style="left:235px;top:210px">-</div>
<div class="t m" style="left:250px;top:210px;width:83px;text-align:right;color:#000">3'720'000</div>
<div class="t m" style="left:338px;top:210px;width:143px;text-align:right;color:#000">807'675</div>
<div class="t m" style="left:486px;top:210px;width:79px;text-align:right;color:#000">1'362'325</div>
<div class="t m" style="left:570px;top:210px;width:80px;text-align:right;color:#000">2'912'325</div>
<div class="t m" style="left:655px;top:210px;width:81px;text-align:right;color:#000">3'720'000</div>
<div class="abs" style="left:0;top:224px;width:230px;height:15px;overflow:hidden">
<div class="t m" style="left:4px;top:2px">-</div>
<div class="t m" style="left:10px;top:2px">02 Доходы</div>
</div>
<div class="t m" style="left:235px;top:226px">+</div>
<div class="t m" style="left:250px;top:226px;width:83px;text-align:right;color:#000">45'922'545</div>
<div class="t m" style="left:338px;top:226px;width:143px;text-align:right;color:#000">23'949'076</div>
<div class="t m" style="left:486px;top:226px;width:79px;text-align:right;color:#000">1'266'253</div>
<div class="t m" style="left:570px;top:226px;width:80px;text-align:right;color:#000">21'973'468</div>
<div class="t m" style="left:655px;top:226px;width:81px;text-align:right;color:#000">45'922'545</div>
<div class="abs" style="left:0;top:240px;width:230px;height:15px;overflow:hidden">
<div class="t m" style="left:16px;top:2px">-</div>
<div class="t m" style="left:22px;top:2px">02.01 Доходы от основной деятельности</div>
</div>
<div class="t m" style="left:235px;top:242px">+</div>
<div class="t m" style="left:250px;top:242px;width:83px;text-align:right;color:#000">45'772'545</div>
<div class="t m" style="left:338px;top:242px;width:143px;text-align:right;color:#000">21'780'927</div>
<div class="t m" style="left:486px;top:242px;width:79px;text-align:right;color:#000">3'346'902</div>
<div class="t m" style="left:570px;top:242px;width:80px;text-align:right;color:#000">23'991'617</div>
<div class="t m" style="left:655px;top:242px;width:81px;text-align:right;color:#000">45'772'545</div>
<div class="abs" style="left:0;top:256px;width:230px;height:15px;overflow:hidden">
<div class="t m" style="left:28px;top:2px">-</div>
<div class="t m" style="left:34px;top:2px">02.01.01 Услуги связи клиентам юридическим</div>
</div>
<div class="t m" style="left:235px;top:258px">+</div>
<div class="t m" style="left:250px;top:258px;width:83px;text-align:right;color:#000">31'205'063</div>
<div class="t m" style="left:338px;top:258px;width:143px;text-align:right;color:#000">15'841'628</div>
<div class="t m" style="left:486px;top:258px;width:79px;text-align:right;color:#000">1'458'119</div>
<div class="t m" style="left:570px;top:258px;width:80px;text-align:right;color:#000">15'363'434</div>
<div class="t m" style="left:655px;top:258px;width:81px;text-align:right;color:#000">31'205'063</div>
<div class="abs" style="left:0;top:272px;width:230px;height:15px;overflow:hidden">
<div class="t m" style="left:40px;top:2px">-</div>
<div class="t m" style="left:46px;top:2px">02.01.01.01 единовременные услуги</div>
</div>
<div class="t m" style="left:235px;top:274px">+</div>
<div class="t m" style="left:250px;top:274px;width:83px;text-align:right;color:#000">3'274'028</div>
<div class="t m" style="left:338px;top:274px;width:143px;text-align:right;color:#000">1'283'137</div>
<div class="t m" style="left:486px;top:274px;width:79px;text-align:right;color:#000">630'368</div>
<div class="t m" style="left:570px;top:274px;width:80px;text-align:right;color:#000">1'990'892</div>
<div class="t m" style="left:655px;top:274px;width:81px;text-align:right;color:#000">3'274'028</div>
<div class="abs" style="left:0;top:288px;width:230px;height:15px;overflow:hidden">
<div class="t m" style="left:58px;top:2px">02.01.01.01.01 организация доступа</div>
</div>
<div class="t m" style="left:235px;top:290px">+</div>
<div class="t m" style="left:250px;top:290px;width:83px;text-align:right;color:#000">78'711</div>
<div class="t m" style="left:338px;top:290px;width:143px;text-align:right;color:#000">265'726</div>
<div class="t m" style="left:486px;top:290px;width:79px;text-align:right;color:#f00">-219'296</div>
<div class="t m" style="left:570px;top:290px;width:80px;text-align:right;color:#f00">-187'015</div>
<div class="t m" style="left:655px;top:290px;width:81px;text-align:right;color:#000">78'711</div>
<div class="abs" style="left:0;top:304px;width:230px;height:15px;overflow:hidden">
<div class="t m" style="left:58px;top:2px">02.01.01.01.02 включение номера</div>
</div>
<div class="t m" style="left:235px;top:306px">+</div>
<div class="t m" style="left:250px;top:306px;width:83px;text-align:right;color:#000">1'909'050</div>
<div class="t m" style="left:338px;top:306px;width:143px;text-align:right;color:#000">735'273</div>
<div class="t m" style="left:486px;top:306px;width:79px;text-align:right;color:#000">372'434</div>
<div class="t m" style="left:570px;top:306px;width:80px;text-align:right;color:#000">1'173'777</div>
<div class="t m" style="left:655px;top:306px;width:81px;text-align:right;color:#000">1'909'050</div>
<div class="abs" style="left:0;top:320px;width:230px;height:15px;overflow:hidden">
<div class="t m" style="left:58px;top:2px">02.01.01.01.03 включение соединительных</div>
</div>
<div class="t m" style="left:235px;top:322px">+</div>
<div class="t m" style="left:250px;top:322px;width:83px;text-align:right;color:#000">71'940</div>
<div class="t m" style="left:338px;top:322px;width:143px;text-align:right;color:#000">13'740</div>
<div class="t m" style="left:486px;top:322px;width:79px;text-align:right;color:#000">28'695</div>
<div class="t m" style="left:570px;top:322px;width:80px;text-align:right;color:#000">58'200</div>
<div class="t m" style="left:655px;top:322px;width:81px;text-align:right;color:#000">71'940</div>
<div class="abs" style="left:0;top:336px;width:230px;height:15px;overflow:hidden">
<div class="t m" style="left:58px;top:2px">02.01.01.01.04 включение каналов</div>
</div>
<div class="t m" style="left:235px;top:338px">+</div>
<div class="t m" style="left:250px;top:338px;width:83px;text-align:right;color:#000">112'847</div>
<div class="t m" style="left:338px;top:338px;width:143px;text-align:right;color:#000">104'574</div>
<div class="t m" style="left:486px;top:338px;width:79px;text-align:right;color:#f00">-38'009</div>
<div class="t m" style="left:570px;top:338px;width:80px;text-align:right;color:#000">8'273</div>
<div class="t m" style="left:655px;top:338px;width:81px;text-align:right;color:#000">112'847</div>
<div class="abs" style="left:0;top:352px;width:230px;height:15px;overflow:hidden">
<div class="t m" style="left:58px;top:2px">02.01.01.01.05 установка доступа</div>
</div>
<div class="t m" style="left:235px;top:354px">+</div>
<div class="t m" style="left:250px;top:354px;width:83px;text-align:right;color:#000">0</div>
<div class="t m" style="left:338px;top:354px;width:143px;text-align:right;color:#000">0</div>
<div class="t m" style="left:486px;top:354px;width:79px;text-align:right;color:#000">0</div>
<div class="t m" style="left:570px;top:354px;width:80px;text-align:right;color:#000">0</div>
<div class="t m" style="left:655px;top:354px;width:81px;text-align:right;color:#000">0</div>
<div class="abs" style="left:0;top:368px;width:230px;height:15px;overflow:hidden">
<div class="t m" style="left:58px;top:2px">02.01.01.01.06 реализация предоставления</div>
</div>
<div class="t m" style="left:235px;top:370px">+</div>
<div class="t m" style="left:250px;top:370px;width:83px;text-align:right;color:#000">1'101'481</div>
<div class="t m" style="left:338px;top:370px;width:143px;text-align:right;color:#000">163'824</div>
<div class="t m" style="left:486px;top:370px;width:79px;text-align:right;color:#000">486'543</div>
<div class="t m" style="left:570px;top:370px;width:80px;text-align:right;color:#000">937'657</div>
<div class="t m" style="left:655px;top:370px;width:81px;text-align:right;color:#000">1'101'481</div>
<div class="abs" style="left:0;top:384px;width:230px;height:15px;overflow:hidden">
<div class="t m" style="left:40px;top:2px">-</div>
<div class="t m" style="left:46px;top:2px">02.01.01.02 ежемесячные услуги:</div>
</div>
<div class="t m" style="left:235px;top:386px">+</div>
<div class="t m" style="left:250px;top:386px;width:83px;text-align:right;color:#000">27'931'034</div>
<div class="t m" style="left:338px;top:386px;width:143px;text-align:right;color:#000">14'558'492</div>
<div class="t m" style="left:486px;top:386px;width:79px;text-align:right;color:#000">827'752</div>
<div class="t m" style="left:570px;top:386px;width:80px;text-align:right;color:#000">13'372'542</div>
<div class="t m" style="left:655px;top:386px;width:81px;text-align:right;color:#000">27'931'034</div>
<div class="abs" style="left:0;top:400px;width:230px;height:15px;overflow:hidden">
<div class="t m" style="left:58px;top:2px">02.01.01.02.01 абонементная плата</div>
</div>
<div class="t m" style="left:235px;top:402px">+</div>
<div class="t m" style="left:250px;top:402px;width:83px;text-align:right;color:#000">5'374'983</div>
<div class="t m" style="left:338px;top:402px;width:143px;text-align:right;color:#000">3'463'665</div>
<div class="t m" style="left:486px;top:402px;width:79px;text-align:right;color:#f00">-397'770</div>
<div class="t m" style="left:570px;top:402px;width:80px;text-align:right;color:#000">1'911'319</div>
<div class="t m" style="left:655px;top:402px;width:81px;text-align:right;color:#000">5'374'983</div>
<div class="abs" style="left:0;top:416px;width:230px;height:15px;overflow:hidden">
<div class="t m" style="left:58px;top:2px">02.01.01.02.02 абонементная плата</div>
</div>
<div class="t m" style="left:235px;top:418px">+</div>
<div class="t m" style="left:250px;top:418px;width:83px;text-align:right;color:#000">1'735'022</div>
<div class="t m" style="left:338px;top:418px;width:143px;text-align:right;color:#000">1'199'326</div>
<div class="t m" style="left:486px;top:418px;width:79px;text-align:right;color:#f00">-175'884</div>
<div class="t m" style="left:570px;top:418px;width:80px;text-align:right;color:#000">535'696</div>
<div class="t m" style="left:655px;top:418px;width:81px;text-align:right;color:#000">1'735'022</div>
<div class="abs" style="left:0;top:432px;width:230px;height:15px;overflow:hidden">
<div class="t m" style="left:58px;top:2px">02.01.01.02.03 специальные услуги</div>
</div>
<div class="t m" style="left:235px;top:434px">+</div>
<div class="t m" style="left:250px;top:434px;width:83px;text-align:right;color:#000">42'318</div>
<div class="t m" style="left:338px;top:434px;width:143px;text-align:right;color:#000">81'166</div>
<div class="t m" style="left:486px;top:434px;width:79px;text-align:right;color:#f00">-56'204</div>
<div class="t m" style="left:570px;top:434px;width:80px;text-align:right;color:#f00">-38'848</div>
<div class="t m" style="left:655px;top:434px;width:81px;text-align:right;color:#000">42'318</div>
<div class="abs" style="left:0;top:448px;width:230px;height:15px;overflow:hidden">
<div class="t m" style="left:58px;top:2px">02.01.01.02.04 местный трафик</div>
</div>
<div class="t m" style="left:235px;top:450px">+</div>
<div class="t m" style="left:250px;top:450px;width:83px;text-align:right;color:#000">5'783'593</div>
<div class="t m" style="left:338px;top:450px;width:143px;text-align:right;color:#000">2'200'883</div>
<div class="t m" style="left:486px;top:450px;width:79px;text-align:right;color:#000">988'769</div>
<div class="t m" style="left:570px;top:450px;width:80px;text-align:right;color:#000">3'582'711</div>
<div class="t m" style="left:655px;top:450px;width:81px;text-align:right;color:#000">5'783'593</div>
<div class="abs" style="left:0;top:464px;width:230px;height:15px;overflow:hidden">
<div class="t m" style="left:58px;top:2px">02.01.01.02.05 м/гор трафик</div>
</div>
<div class="t m" style="left:235px;top:466px">+</div>
<div class="t m" style="left:250px;top:466px;width:83px;text-align:right;color:#000">7'995'507</div>
<div class="t m" style="left:338px;top:466px;width:143px;text-align:right;color:#000">4'079'698</div>
<div class="t m" style="left:486px;top:466px;width:79px;text-align:right;color:#000">197'029</div>
<div class="t m" style="left:570px;top:466px;width:80px;text-align:right;color:#000">3'915'808</div>
<div class="t m" style="left:655px;top:466px;width:81px;text-align:right;color:#000">7'995'507</div>
<div class="abs" style="left:0;top:480px;width:230px;height:15px;overflow:hidden">
<div class="t m" style="left:58px;top:2px">02.01.01.02.06 м/нар трафик</div>
</div>
<div class="t m" style="left:235px;top:482px">+</div>
<div class="t m" style="left:250px;top:482px;width:83px;text-align:right;color:#000">4'854'660</div>
<div class="t m" style="left:338px;top:482px;width:143px;text-align:right;color:#000">2'492'331</div>
<div class="t m" style="left:486px;top:482px;width:79px;text-align:right;color:#000">91'729</div>
<div class="t m" style="left:570px;top:482px;width:80px;text-align:right;color:#000">2'362'329</div>
<div class="t m" style="left:655px;top:482px;width:81px;text-align:right;color:#000">4'854'660</div>
<div class="abs" style="left:0;top:496px;width:230px;height:15px;overflow:hidden">
<div class="t m" style="left:58px;top:2px">02.01.01.02.07 аренда каналов ПД</div>
</div>
<div class="t m" style="left:235px;top:498px">+</div>
<div class="t m" style="left:250px;top:498px;width:83px;text-align:right;color:#000">1'410'587</div>
<div class="t m" style="left:338px;top:498px;width:143px;text-align:right;color:#000">492'555</div>
<div class="t m" style="left:486px;top:498px;width:79px;text-align:right;color:#000">339'512</div>
<div class="t m" style="left:570px;top:498px;width:80px;text-align:right;color:#000">918'032</div>
<div class="t m" style="left:655px;top:498px;width:81px;text-align:right;color:#000">1'410'587</div>
<div class="abs" style="left:0;top:512px;width:230px;height:15px;overflow:hidden">
<div class="t m" style="left:52px;top:2px">-</div>
<div class="t m" style="left:58px;top:2px">02.01.01.02.09 услуги доступа в Интернет</div>
</div>
<div class="t m" style="left:235px;top:514px">+</div>
<div class="t m" style="left:250px;top:514px;width:83px;text-align:right;color:#000">734'364</div>
<div class="t m" style="left:338px;top:514px;width:143px;text-align:right;color:#000">530'520</div>
<div class="t m" style="left:486px;top:514px;width:79px;text-align:right;color:#f00">-141'081</div>
<div class="t m" style="left:570px;top:514px;width:80px;text-align:right;color:#000">203'844</div>
<div class="t m" style="left:655px;top:514px;width:81px;text-align:right;color:#000">734'364</div>
<div class="abs" style="left:0;top:528px;width:230px;height:15px;overflow:hidden">
<div class="t m" style="left:70px;top:2px">02.01.01.02.09.01 доступ в Интернет</div>
</div>
<div class="t m" style="left:235px;top:530px">+</div>
<div class="t m" style="left:250px;top:530px;width:83px;text-align:right;color:#000">206'535</div>
<div class="t m" style="left:338px;top:530px;width:143px;text-align:right;color:#000">105'468</div>
<div class="t m" style="left:486px;top:530px;width:79px;text-align:right;color:#000">653</div>
<div class="t m" style="left:570px;top:530px;width:80px;text-align:right;color:#000">101'067</div>
<div class="t m" style="left:655px;top:530px;width:81px;text-align:right;color:#000">206'535</div>
<div class="abs" style="left:0;top:544px;width:230px;height:15px;overflow:hidden">
<div class="t m" style="left:70px;top:2px">02.01.01.02.09.02 доступ в Интернет</div>
</div>
<div class="t m" style="left:235px;top:546px">+</div>
<div class="t m" style="left:250px;top:546px;width:83px;text-align:right;color:#000">502'438</div>
<div class="t m" style="left:338px;top:546px;width:143px;text-align:right;color:#000">407'417</div>
<div class="t m" style="left:486px;top:546px;width:79px;text-align:right;color:#f00">-139'075</div>
<div class="t m" style="left:570px;top:546px;width:80px;text-align:right;color:#000">95'022</div>
<div class="t m" style="left:655px;top:546px;width:81px;text-align:right;color:#000">502'438</div>
<div class="abs" style="left:0;top:560px;width:230px;height:15px;overflow:hidden">
<div class="t m" style="left:70px;top:2px">02.01.01.02.09.03 дополнительные</div>
</div>
<div class="t m" style="left:235px;top:562px">+</div>
<div class="t m" style="left:250px;top:562px;width:83px;text-align:right;color:#000">25'391</div>
<div class="t m" style="left:338px;top:562px;width:143px;text-align:right;color:#000">17'636</div>
<div class="t m" style="left:486px;top:562px;width:79px;text-align:right;color:#f00">-2'658</div>
<div class="t m" style="left:570px;top:562px;width:80px;text-align:right;color:#000">7'755</div>
<div class="t m" style="left:655px;top:562px;width:81px;text-align:right;color:#000">25'391</div>
</div>
<div class="checker abs" style="left:802px;top:101px;width:16px;height:589px"></div>
<div class="r3d" style="left:802px;top:101px;width:16px;height:16px"></div>
<div class="abs" style="left:806px;top:107px;width:0;height:0;border-left:4px solid transparent;border-right:4px solid transparent;border-bottom:4px solid #000"></div>
<div class="r3d" style="left:802px;top:117px;width:16px;height:254px"></div>
<div class="r3d" style="left:802px;top:674px;width:16px;height:16px"></div>
<div class="abs" style="left:806px;top:680px;width:0;height:0;border-left:4px solid transparent;border-right:4px solid transparent;border-top:4px solid #000"></div>
<div class="t" style="left:47px;top:694px">Запись:</div>
<div class="abs" style="left:92px;top:692px;width:20px;height:15px;border:1px solid;border-color:#fff #404040 #404040 #fff;box-shadow:inset -1px -1px #808080"></div>
<div class="abs" style="left:112px;top:692px;width:20px;height:15px;border:1px solid;border-color:#fff #404040 #404040 #fff;box-shadow:inset -1px -1px #808080"></div>
<div class="abs" style="left:204px;top:692px;width:20px;height:15px;border:1px solid;border-color:#fff #404040 #404040 #fff;box-shadow:inset -1px -1px #808080"></div>
<div class="abs" style="left:224px;top:692px;width:20px;height:15px;border:1px solid;border-color:#fff #404040 #404040 #fff;box-shadow:inset -1px -1px #808080"></div>
<div class="abs" style="left:244px;top:692px;width:20px;height:15px;border:1px solid;border-color:#fff #404040 #404040 #fff;box-shadow:inset -1px -1px #808080"></div>
<div class="abs" style="left:264px;top:692px;width:20px;height:15px;border:1px solid;border-color:#fff #404040 #404040 #fff;box-shadow:inset -1px -1px #808080"></div>
<div class="abs" style="left:284px;top:692px;width:20px;height:15px;border:1px solid;border-color:#fff #404040 #404040 #fff;box-shadow:inset -1px -1px #808080"></div>
<div class="abs" style="left:136px;top:692px;width:64px;height:15px;background:#fff;border:1px solid;border-color:#404040 #fff #d4d0c8 #404040;box-shadow:inset 1px 1px #000"></div>
<div class="t" style="left:140px;top:693px;width:56px;text-align:right">1</div>
<div class="t" style="left:309px;top:694px">из  42</div>
<svg class="abs" style="left:0;top:0" width="340" height="712" viewBox="0 0 340 712"><rect x="97" y="696" width="2" height="8" fill="#000"/><path d="M104 695.5v9l-5-4.5z" fill="#000"/><path d="M124 696v8l-4.5-4z" fill="#808080"/><path d="M124.5 696v8" stroke="#fff" stroke-width="0.8"/><path d="M211 696v8l4.5-4z" fill="#000"/><path d="M229 696v8l4.5-4z" fill="#000"/><rect x="235" y="696" width="2" height="8" fill="#000"/><path d="M248 696v8l4.5-4z" fill="#808080"/><path d="M256.5 696.5v7M253 700h7M254 697.5l5 5M259 697.5l-5 5" stroke="#808080"/><rect x="266" y="696" width="15" height="8" rx="4" fill="#808080"/><path d="M271 698l5 5M276 698l-5 5" stroke="#fff" stroke-width="1.5"/><path d="M288 696v8l4.5-4z" fill="#000"/><rect x="294" y="696" width="2" height="8" fill="#000"/><rect x="297" y="703" width="1" height="1" fill="#000"/><rect x="299" y="703" width="1" height="1" fill="#000"/></svg>
<div class="abs" style="left:13px;top:717px;width:715px;height:16px;border:1px solid #e2dfd9"></div>
<div class="abs" style="left:746px;top:717px;width:31px;height:16px;border:1px solid #e2dfd9"></div>
<div class="abs" style="left:780px;top:717px;width:26px;height:16px;border:1px solid #e2dfd9"></div>
<div class="abs" style="left:808px;top:717px;width:26px;height:16px;border:1px solid #e2dfd9"></div>
<div class="abs" style="left:836px;top:717px;width:31px;height:16px;border:1px solid #e2dfd9"></div>
<div class="abs" style="left:869px;top:717px;width:33px;height:16px;border:1px solid #e2dfd9"></div>
<div class="abs" style="left:904px;top:717px;width:26px;height:16px;border:1px solid #e2dfd9"></div>
<div class="abs" style="left:933px;top:717px;width:30px;height:16px;border:1px solid #e2dfd9"></div>
<div class="abs" style="left:965px;top:717px;width:29px;height:16px;border:1px solid #e2dfd9"></div>
<div class="t" style="left:14px;top:719px">Режим таблицы</div>
<div class="t" style="left:905px;top:719px">NUM</div>
<div class="abs" style="left:0;top:738px;width:1024px;height:30px;background:#d4d0c8"></div>
<div class="abs" style="left:0;top:739px;width:1024px;height:1px;background:#fff"></div>
<div class="abs" style="left:2px;top:742px;width:51px;height:22px;border:1px solid;border-color:#fff #404040 #404040 #fff;box-shadow:inset -1px -1px #808080"></div>
<div class="t" style="left:22px;top:747px;font-weight:bold;font-size:11px;letter-spacing:1px">Пуск</div>
<div class="tb3d" style="left:140px;top:742px;width:160px;height:22px"></div>
<div class="t" style="left:163px;top:747px;letter-spacing:0.15px">Справка по SQL_BOSS -...</div>
<div class="abs checker" style="left:303px;top:742px;width:160px;height:22px;border:1px solid;border-color:#404040 #fff #fff #404040;box-shadow:inset 1px 1px #808080"></div>
<div class="t" style="left:327px;top:747px;font-weight:bold;letter-spacing:0.7px">Остаток денежных ...</div>
<div class="abs" style="left:935px;top:746px;width:16px;height:16px;background:#0a246a"></div>
<div class="t" style="left:936px;top:748px;color:#fff;letter-spacing:-0.6px">EN</div>
<div class="abs" style="left:955px;top:742px;width:2px;height:24px;border-left:1px solid #808080;border-right:1px solid #fff"></div>
<div class="abs" style="left:960px;top:742px;width:62px;height:24px;border:1px solid;border-color:#808080 #fff #fff #808080"></div>
<div class="t" style="left:986px;top:748px">11:38</div>
<svg class="abs" style="left:0;top:0" width="1024" height="768" viewBox="0 0 1024 768"><path d="M6 746c2-1 5-1 7 0l-1 5c-2-1-5-1-7 0z" fill="#f05a20"/><path d="M13 747c2 1 4 0 6-1l-1 6c-2 1-4 1-6 0z" fill="#6ad01a"/><path d="M5 751c2-1 5-1 7 0l-1 6c-2-1-5-1-7 0z" fill="#3a6ef0"/><path d="M12 753c2 1 4 1 6 0l-1 5c-2 1-4 1-6 0z" fill="#f8d010"/><rect x="61" y="746" width="16" height="16" fill="#808000"/><path d="M63 751v-3h3M72 748h3v3M75 757v3h-3M66 760h-3v-3" stroke="#fff" fill="none" stroke-width="1.8"/><circle cx="69" cy="754" r="4" fill="none" stroke="#fff" stroke-width="2"/><path d="M68.5 751.5v3h2.5" stroke="#fff" fill="none" stroke-width="1.2"/><path d="M87.5 754h9.5A5 5 0 1 0 95.8 757.6" stroke="#1f7ad8" stroke-width="2.8" fill="none"/><path d="M86 760.5c-2 0 -1 -4 4 -8.5c5 -4 9 -6 10 -4" fill="none" stroke="#70c4f4" stroke-width="1.2"/><rect x="107.5" y="747.5" width="13" height="13" rx="1.5" fill="#2e7bd8" stroke="#1b4fa0"/><path d="M109 751c0-2 2-2 3-2h6v8c0 2-1 2-3 2h-6z" fill="#f8f4d8"/><path d="M113 754h4v-3" fill="none" stroke="#3070d0" stroke-width="1.2"/><path d="M112 756l5-5" stroke="#5090e0" stroke-width="1.5"/><rect x="111" y="755" width="2" height="2" fill="#000"/><path d="M121 750v4M119 752h4" stroke="#f05020" stroke-width="1"/><path d="M148.5 746.5h8l3 3v11h-11z" fill="#fff" stroke="#333"/><rect x="144" y="748" width="9" height="8" fill="#0a0ad0"/><rect x="145" y="749" width="7" height="6" fill="#fff"/><path d="M145.5 749.5l1.5 5l1.5-4l1.5 4l1.5-5" stroke="#0a0ad0" fill="none" stroke-width="1"/><path d="M154 752.5h4M154 754.5h4M150 757.5h8" stroke="#555"/><rect x="309.5" y="747.5" width="13" height="11" fill="#fff" stroke="#000"/><rect x="310" y="748" width="12" height="1.5" fill="#0a246a"/><path d="M311 751.5h3M311 755.5h3" stroke="#000"/><rect x="315.5" y="750.5" width="5" height="3" fill="none" stroke="#000"/><rect x="315.5" y="754.5" width="5" height="3" fill="none" stroke="#000"/><path d="M964 755l6-8l9 7l-6 7l-9-3z" fill="#f0e040" stroke="#555" stroke-width="0.8"/><path d="M966 754l5-6M968 756l6-6M970 758l5-6" stroke="#fff" stroke-width="0.8"/><circle cx="972" cy="753" r="1" fill="#1030e0"/><path d="M1006 735l13-13M1010 735l9-9M1014 735l5-5" stroke="#fff" stroke-width="1"/><path d="M1007 735l12-12M1011 735l8-8M1015 735l4-4" stroke="#808080" stroke-width="1.4"/></svg>
</body></html>
